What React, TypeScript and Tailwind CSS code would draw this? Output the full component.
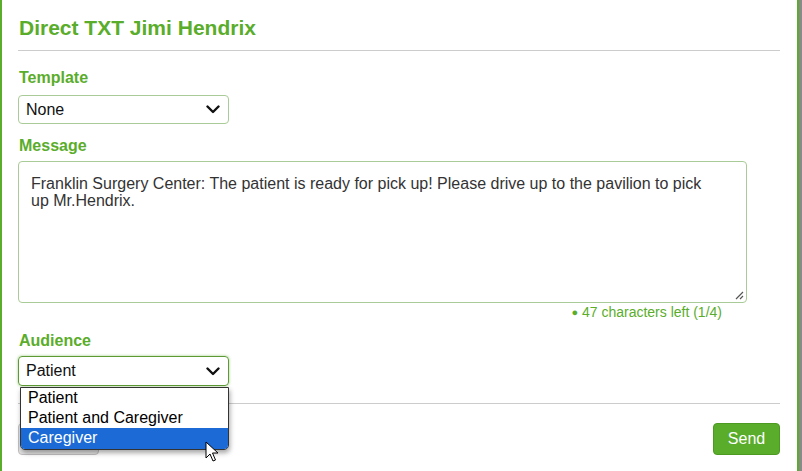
import React from "react";

const green = "text-[#5aad2b]";

const Chevron = () => (
  <svg width="14" height="9" viewBox="0 0 14 9" className="shrink-0">
    <path d="M1.5 1.5 L7 7 L12.5 1.5" fill="none" stroke="#111" strokeWidth="2.4" strokeLinecap="round" strokeLinejoin="round" />
  </svg>
);

const Cursor = () => (
  <svg width="16" height="22" viewBox="0 0 16 22">
    <path d="M1 1 L1 17 L5 13 L8 20 L10.5 19 L7.5 12 L13 12 Z" fill="#fff" stroke="#000" strokeWidth="1" strokeLinejoin="round" />
  </svg>
);

export default function App() {
  return (
    <div className="w-[802px] h-[471px] bg-[#8a8a8a] flex overflow-hidden" style={{ fontFamily: '"Liberation Sans", Arial, sans-serif' }}>
      <div className="relative w-[799px] h-full bg-white border-x-2 border-[#5aad2b]">
        <div className="mx-[16px] w-[762px] border-b border-[#cccccc] pt-[16px] pb-[10px]">
          <h1 className={`text-[21px] leading-[24px] font-bold ${green} pl-[1px]`}>Direct TXT Jimi Hendrix</h1>
        </div>

        <div className="px-[16px] pt-[17px]">
          <label className={`block text-[16px] leading-[20px] font-bold ${green} pl-[1px]`}>Template</label>
          <div className="mt-[7px] w-[211px] h-[29px] border border-[#a9cb98] rounded-[4px] flex items-center justify-between pl-[7px] pr-[8px] text-[16px] text-[#111]">
            <span>None</span>
            <Chevron />
          </div>

          <label className={`block mt-[12px] text-[16px] leading-[20px] font-bold ${green} pl-[1px]`}>Message</label>
          <div className="relative mt-[5px] w-[729px] h-[142px] border border-[#a9cb98] rounded-[4px] pl-[12px] pt-[13px] text-[16px] leading-[17px] text-[#333]">
            <p className="w-[690px]">
              Franklin Surgery Center: The patient is ready for pick up! Please drive up to the pavilion to pick up Mr.Hendrix.
            </p>
            <svg width="10" height="10" viewBox="0 0 10 10" className="absolute right-[2px] bottom-[2px]">
              <path d="M9 2 L2 9 M9 6 L6 9" stroke="#555" strokeWidth="1.2" />
            </svg>
          </div>
          <div className={`w-[729px] text-right pr-[25px] pt-[1px] text-[14px] leading-[16px] ${green}`}>
            <span className="text-[11px] align-[1px]">●</span> 47 characters left (1/4)
          </div>

          <label className={`block mt-[11px] text-[16px] leading-[20px] font-bold ${green} pl-[1px]`}>Audience</label>
          <div className="mt-[5px] w-[211px] h-[30px] border border-[#5d9a35] rounded-[4px] shadow-[0_0_3px_rgba(90,173,43,0.6)] flex items-center justify-between pl-[7px] pr-[8px] text-[16px] text-[#111]">
            <span>Patient</span>
            <Chevron />
          </div>
        </div>

        <div className="mx-[16px] w-[762px] mt-[17px] border-t border-[#cccccc] pt-[19px] flex justify-between">
          <button className="w-[81px] h-[32px] bg-[#e6e6e6] border border-[#c2c2c2] rounded-[4px] text-[16px] text-[#333]">Cancel</button>
          <button className="w-[67px] h-[32px] bg-[#5aad2b] border border-[#4d9a22] rounded-[4px] text-[16px] text-white">Send</button>
        </div>

        <div className="absolute left-[18px] top-[387px] w-[209px] bg-white border border-[#333] rounded-b-[5px] overflow-hidden shadow-[1px_3px_5px_rgba(0,0,0,0.35)] text-[16px] leading-[20px] text-black">
          <div className="pl-[7px] h-[20px]">Patient</div>
          <div className="pl-[7px] h-[20px]">Patient and Caregiver</div>
          <div className="pl-[7px] h-[21px] bg-[#1b6ad6] text-white">Caregiver</div>
        </div>

        <div className="absolute left-[203px] top-[441px]">
          <Cursor />
        </div>
      </div>
    </div>
  );
}
